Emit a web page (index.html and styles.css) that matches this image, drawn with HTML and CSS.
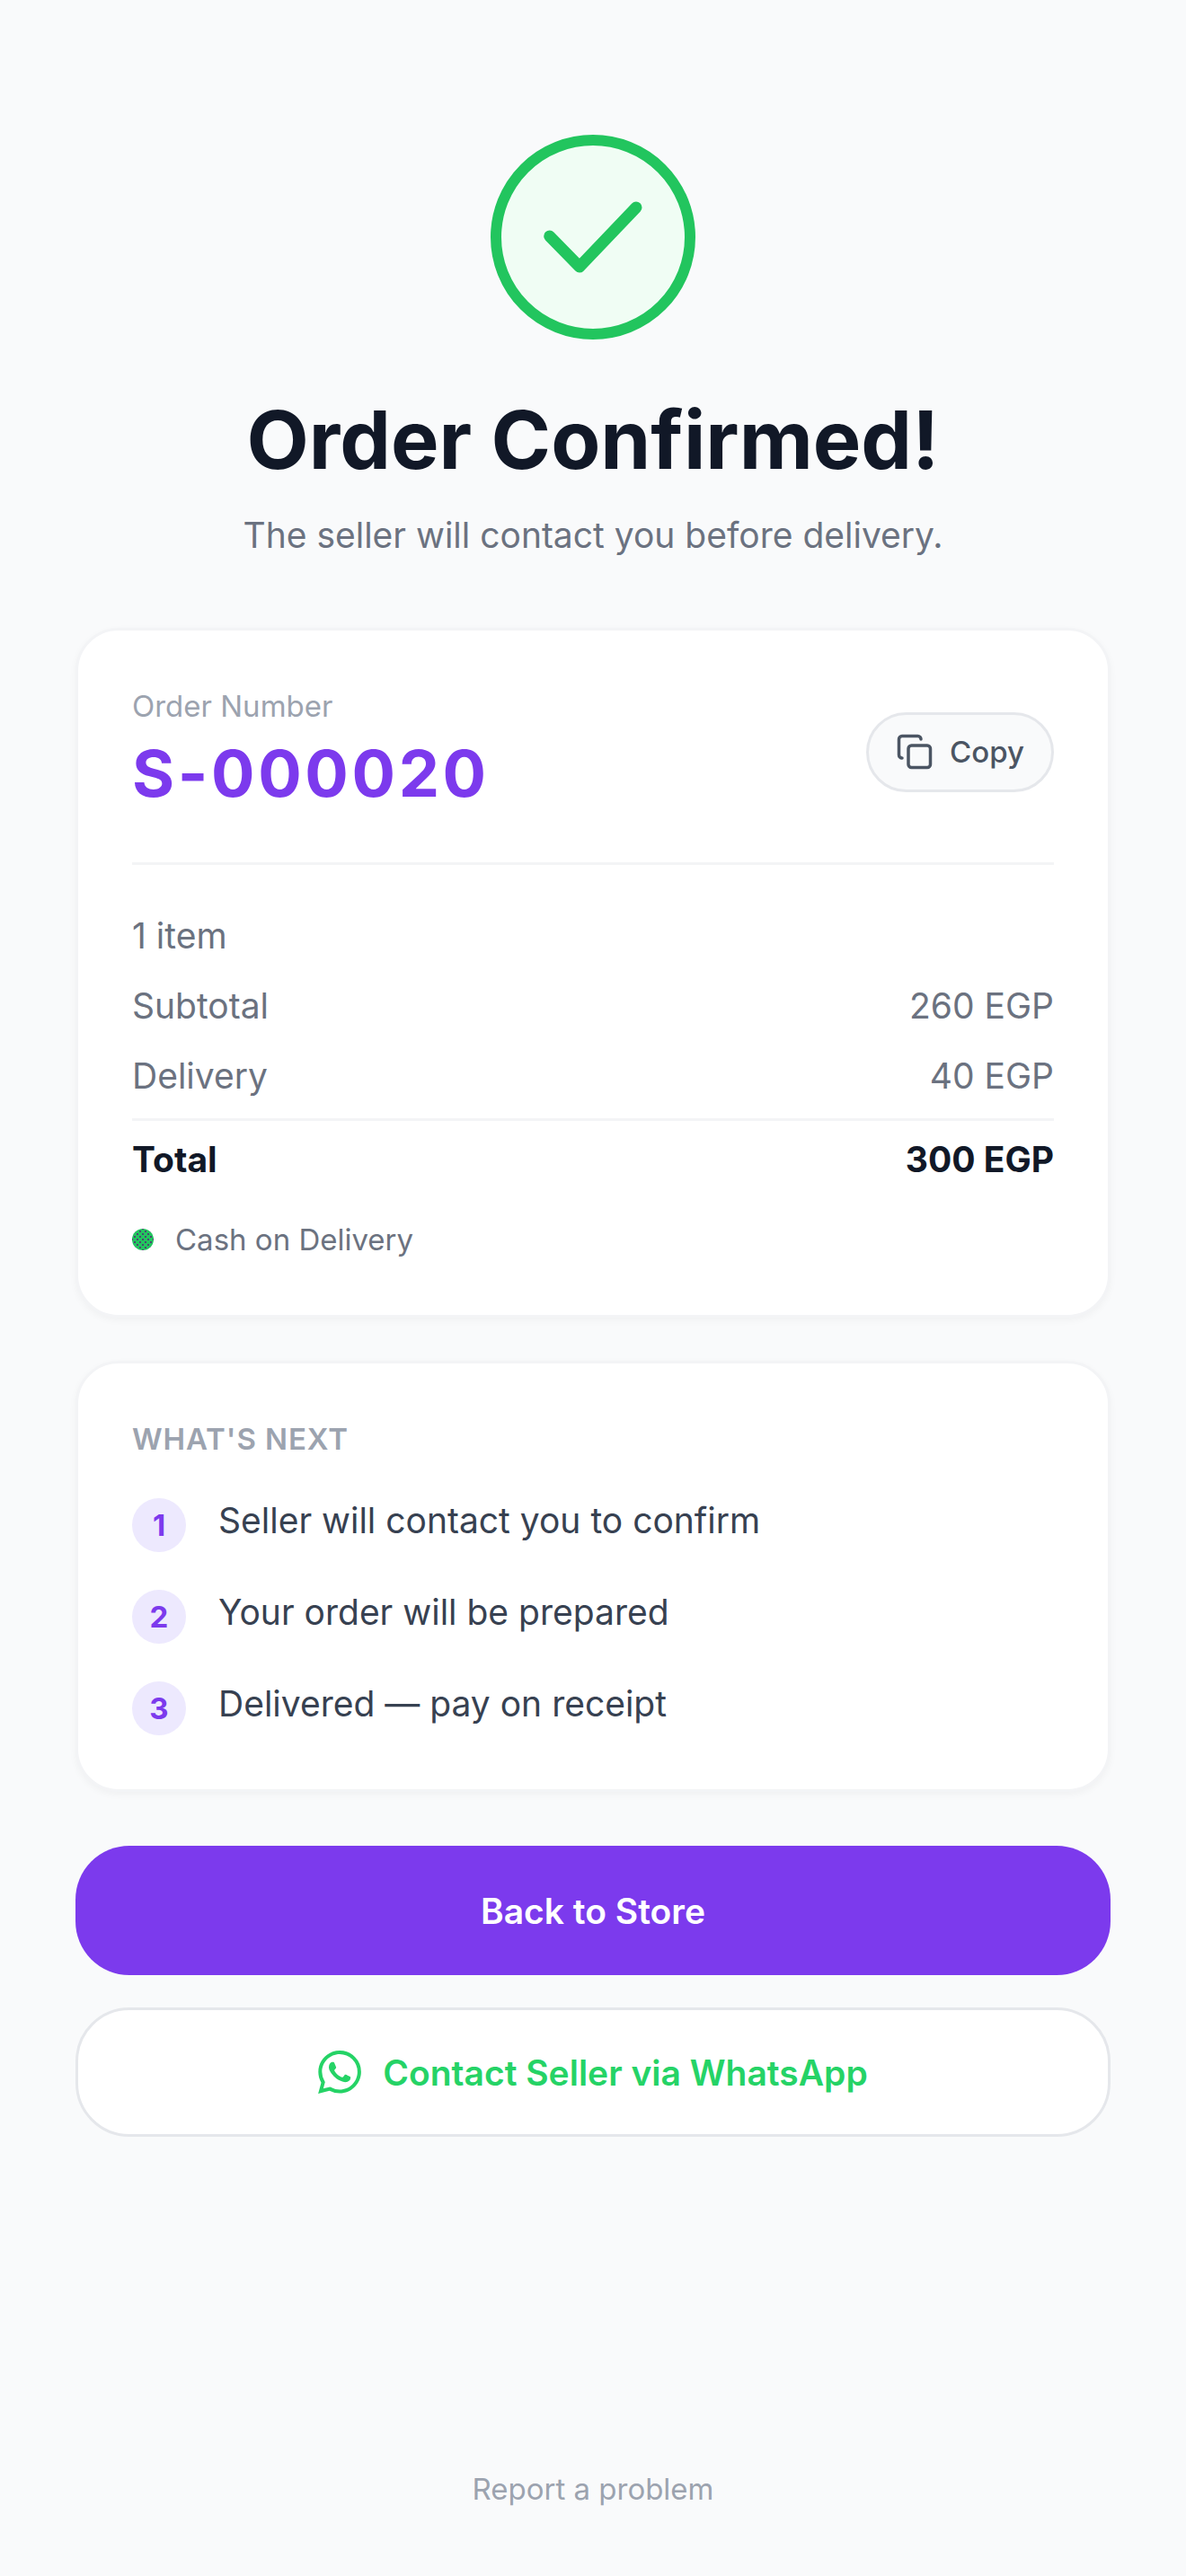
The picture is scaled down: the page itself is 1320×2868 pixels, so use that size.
FILE: index.html
```html
<!DOCTYPE html>
<html lang="en">
<head>
<meta charset="utf-8">
<title>Order Confirmed</title>
<link rel="stylesheet" href="styles.css">
</head>
<body>
<main class="page">
  <div class="badge">
    <svg class="check" viewBox="0 0 204 204" fill="none" stroke="#22c55e" stroke-width="13" stroke-linecap="round" stroke-linejoin="round"><path d="M53.700 101 87 135 150 69"/></svg>
  </div>
  <h1 class="title">Order Confirmed!</h1>
  <p class="subtitle">The seller will contact you before delivery.</p>

  <section class="card summary">
    <div class="order-head">
      <div>
        <div class="order-label">Order Number</div>
        <div class="order-number">S-000020</div>
      </div>
      <button class="copy" type="button">
        <svg class="copy-icon" viewBox="0 0 24 24" fill="none" stroke="#4b5563" stroke-width="2" stroke-linecap="round" stroke-linejoin="round"><rect x="8" y="8" width="14" height="14" rx="2"/><path d="M4 16c-1.100 0-2-.9-2-2V4c0-1.100.9-2 2-2h10c1.100 0 2 .9 2 2"/></svg>
        <span>Copy</span>
      </button>
    </div>
    <div class="rows">
      <div class="row"><span>1 item</span></div>
      <div class="row"><span>Subtotal</span><span>260 EGP</span></div>
      <div class="row"><span>Delivery</span><span>40 EGP</span></div>
    </div>
    <div class="row total"><span>Total</span><span>300 EGP</span></div>
    <div class="payment"><span class="dot"></span><span>Cash on Delivery</span></div>
  </section>

  <section class="card next">
    <h2 class="next-title">What's Next</h2>
    <ol class="steps">
      <li class="step"><span class="num">1</span><span>Seller will contact you to confirm</span></li>
      <li class="step"><span class="num">2</span><span>Your order will be prepared</span></li>
      <li class="step"><span class="num">3</span><span>Delivered — pay on receipt</span></li>
    </ol>
  </section>

  <div class="actions">
    <a class="btn primary" href="#">Back to Store</a>
    <a class="btn whatsapp" href="#">
      <svg class="wa-icon" viewBox="0 0 24 24" fill="#25d366"><path d="M17.472 14.382c-.297-.149-1.758-.867-2.03-.967-.273-.099-.471-.148-.67.15-.197.297-.767.966-.94 1.164-.173.199-.347.223-.644.075-.297-.15-1.255-.463-2.39-1.475-.883-.788-1.48-1.761-1.653-2.059-.173-.297-.018-.458.13-.606.134-.133.298-.347.446-.52.149-.174.198-.298.298-.497.099-.198.05-.371-.025-.52-.075-.149-.669-1.612-.916-2.207-.242-.579-.487-.5-.669-.51-.173-.008-.371-.01-.57-.01-.198 0-.52.074-.792.372-.272.297-1.04 1.016-1.04 2.479 0 1.462 1.065 2.875 1.213 3.074.149.198 2.096 3.2 5.077 4.487.709.306 1.262.489 1.694.625.712.227 1.36.195 1.871.118.571-.085 1.758-.719 2.006-1.413.248-.694.248-1.289.173-1.413-.074-.124-.272-.198-.57-.347m-5.421 7.403h-.004a9.870 9.870 0 01-5.031-1.378l-.361-.214-3.741.982.998-3.648-.235-.374a9.860 9.860 0 01-1.510-5.260c.001-5.450 4.436-9.884 9.888-9.884 2.640 0 5.122 1.030 6.988 2.898a9.825 9.825 0 012.893 6.994c-.003 5.450-4.437 9.884-9.885 9.884m8.413-18.297A11.815 11.815 0 0012.050 0C5.495 0 .16 5.335.157 11.892c0 2.096.547 4.142 1.588 5.945L.057 24l6.305-1.654a11.882 11.882 0 005.683 1.448h.005c6.554 0 11.890-5.335 11.893-11.893a11.821 11.821 0 00-3.480-8.413z"/></svg>
      <span>Contact Seller via WhatsApp</span>
    </a>
  </div>

  <a class="report" href="#">Report a problem</a>
</main>
</body>
</html>
```
FILE: styles.css
```css
* { box-sizing: border-box; }

html, body {
  margin: 0;
  background: #f9fafb;
}

body {
  font-family: Inter, "Liberation Sans", sans-serif;
  color: #111827;
}

.page {
  min-height: 2868px;
  padding: 150px 84px 73px;
  display: flex;
  flex-direction: column;
  align-items: stretch;
}

.badge {
  width: 228px;
  height: 228px;
  align-self: center;
  border: 12px solid #22c55e;
  border-radius: 50%;
  background: #f0fdf4;
}

.check {
  display: block;
  width: 204px;
  height: 204px;
}

.title {
  margin: 59px 0 0;
  font-size: 90px;
  line-height: 106px;
  font-weight: 700;
  text-align: center;
  color: #111827;
}

.subtitle {
  margin: 23px 0 73px;
  font-size: 39px;
  line-height: 60px;
  text-align: center;
  color: #6b7280;
}

.card {
  background: #fff;
  border: 3px solid #f3f4f6;
  border-radius: 48px;
  padding: 60px;
  box-shadow: 0 3px 8px rgba(0, 0, 0, 0.04);
}

.order-head {
  display: flex;
  justify-content: space-between;
  align-items: center;
  padding-bottom: 48px;
  border-bottom: 3px solid #f3f4f6;
}

.order-label {
  font-size: 33px;
  line-height: 48px;
  color: #9ca3af;
}

.order-number {
  font-size: 72px;
  line-height: 102px;
  font-weight: 700;
  letter-spacing: 3.6px;
  color: #7c3aed;
}

.copy {
  display: flex;
  align-items: center;
  gap: 18px;
  height: 89px;
  padding: 0 30px;
  background: #f9fafb;
  border: 3px solid #e5e7eb;
  border-radius: 45px;
  font-family: inherit;
  font-size: 33px;
  font-weight: 500;
  color: #4b5563;
}

.copy-icon {
  width: 42px;
  height: 42px;
}

.rows {
  display: flex;
  flex-direction: column;
  gap: 18px;
  margin-top: 49px;
  padding-bottom: 17px;
  border-bottom: 3px solid #f3f4f6;
}

.row {
  display: flex;
  justify-content: space-between;
  font-size: 39px;
  line-height: 60px;
  color: #6b7280;
}

.total {
  margin-top: 13px;
  font-weight: 700;
  color: #111827;
}

.payment {
  display: flex;
  align-items: center;
  gap: 24px;
  margin-top: 35px;
  font-size: 33px;
  line-height: 48px;
  color: #6b7280;
}

.dot {
  width: 24px;
  height: 24px;
  border-radius: 50%;
  background-color: #22c55e;
  background-image:
    radial-gradient(circle at center, #4a4a70 0 0.9px, transparent 1px),
    radial-gradient(circle at center, #4a4a70 0 0.9px, transparent 1px);
  background-size: 6px 6px;
  background-position: 0 0, 3px 3px;
}

.next {
  margin-top: 48px;
}

.next-title {
  margin: 0 0 42px;
  font-size: 33px;
  line-height: 48px;
  font-weight: 600;
  letter-spacing: 0.9px;
  text-transform: uppercase;
  color: #9ca3af;
}

.steps {
  margin: 0;
  padding: 0;
  list-style: none;
  display: flex;
  flex-direction: column;
  gap: 42px;
}

.step {
  display: flex;
  align-items: flex-start;
  gap: 36px;
  font-size: 39px;
  line-height: 50px;
  color: #374151;
}

.num {
  flex: none;
  width: 60px;
  height: 60px;
  display: flex;
  align-items: center;
  justify-content: center;
  border-radius: 50%;
  background: #ede9fe;
  font-size: 33px;
  font-weight: 700;
  color: #7c3aed;
}

.actions {
  display: flex;
  flex-direction: column;
  gap: 36px;
  margin-top: 60px;
}

.btn {
  display: flex;
  align-items: center;
  justify-content: center;
  height: 144px;
  border-radius: 60px;
  font-size: 39px;
  font-weight: 600;
  text-decoration: none;
}

.primary {
  background: #7c3aed;
  color: #fff;
}

.whatsapp {
  gap: 24px;
  background: #fff;
  border: 3px solid #e5e7eb;
  color: #25d366;
}

.wa-icon {
  width: 48px;
  height: 48px;
}

.report {
  margin-top: auto;
  font-size: 33px;
  line-height: 48px;
  text-align: center;
  text-decoration: none;
  color: #9ca3af;
}
```
